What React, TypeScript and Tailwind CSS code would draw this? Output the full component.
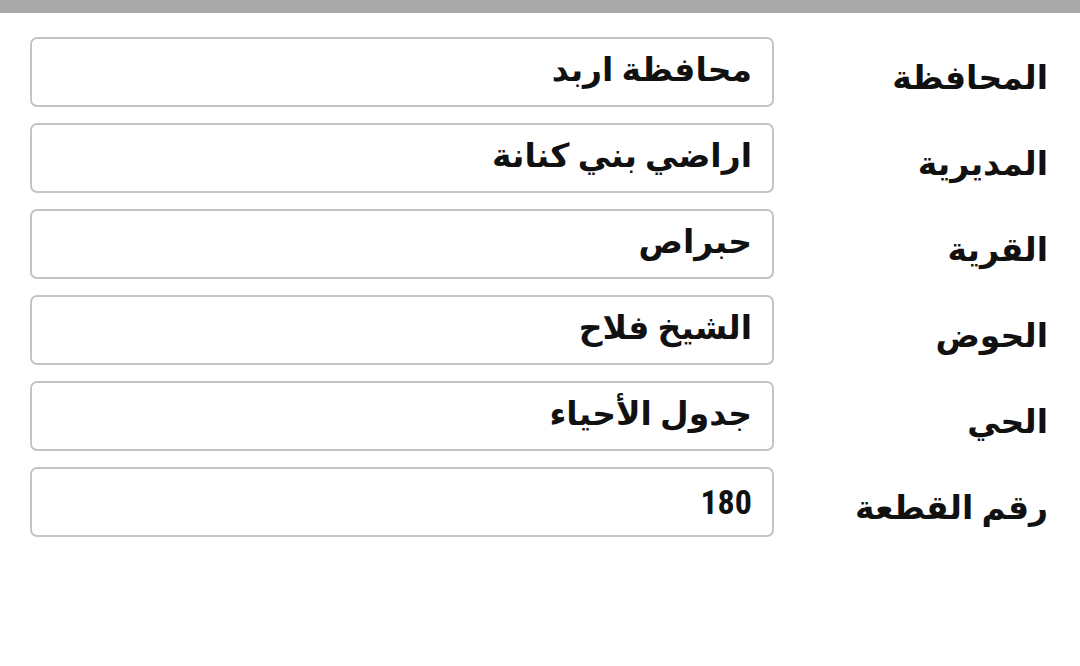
const fields = [
  { label: "المحافظة", value: "محافظة اربد" },
  { label: "المديرية", value: "اراضي بني كنانة" },
  { label: "القرية", value: "حبراص" },
  { label: "الحوض", value: "الشيخ فلاح" },
  { label: "الحي", value: "جدول الأحياء" },
  { label: "رقم القطعة", value: "180" },
];

// numbers read narrower and taller than the arabic values
const isNumber = (v: string) => /^\d+$/.test(v);

export default function App() {
  return (
    <div className="min-h-[666px] w-[1080px] bg-white" style={{ fontFamily: "Roboto, 'DejaVu Sans', sans-serif" }}>
      <div className="h-[13px] bg-[#a9a9a9]" />
      <div dir="rtl" className="flex flex-col gap-[16px] pt-[24px] pl-[30px] pr-[32px]">
        {fields.map((f) => (
          <div key={f.label} className="flex items-center">
            <div className="w-[274px] pt-[12px] text-[33px] font-bold text-[#111]">{f.label}</div>
            <div className="flex h-[70px] flex-1 items-center rounded-[7px] border-2 border-[#c4c4c4] px-[20px] pb-[4px] text-[33px] font-bold text-[#111]">
              {isNumber(f.value) ? (
                <span className="pt-[4px] text-[34px]" style={{ fontFamily: "'Liberation Sans Narrow', 'Roboto Condensed', Roboto, sans-serif" }}>
                  {f.value}
                </span>
              ) : (
                f.value
              )}
            </div>
          </div>
        ))}
      </div>
    </div>
  );
}
